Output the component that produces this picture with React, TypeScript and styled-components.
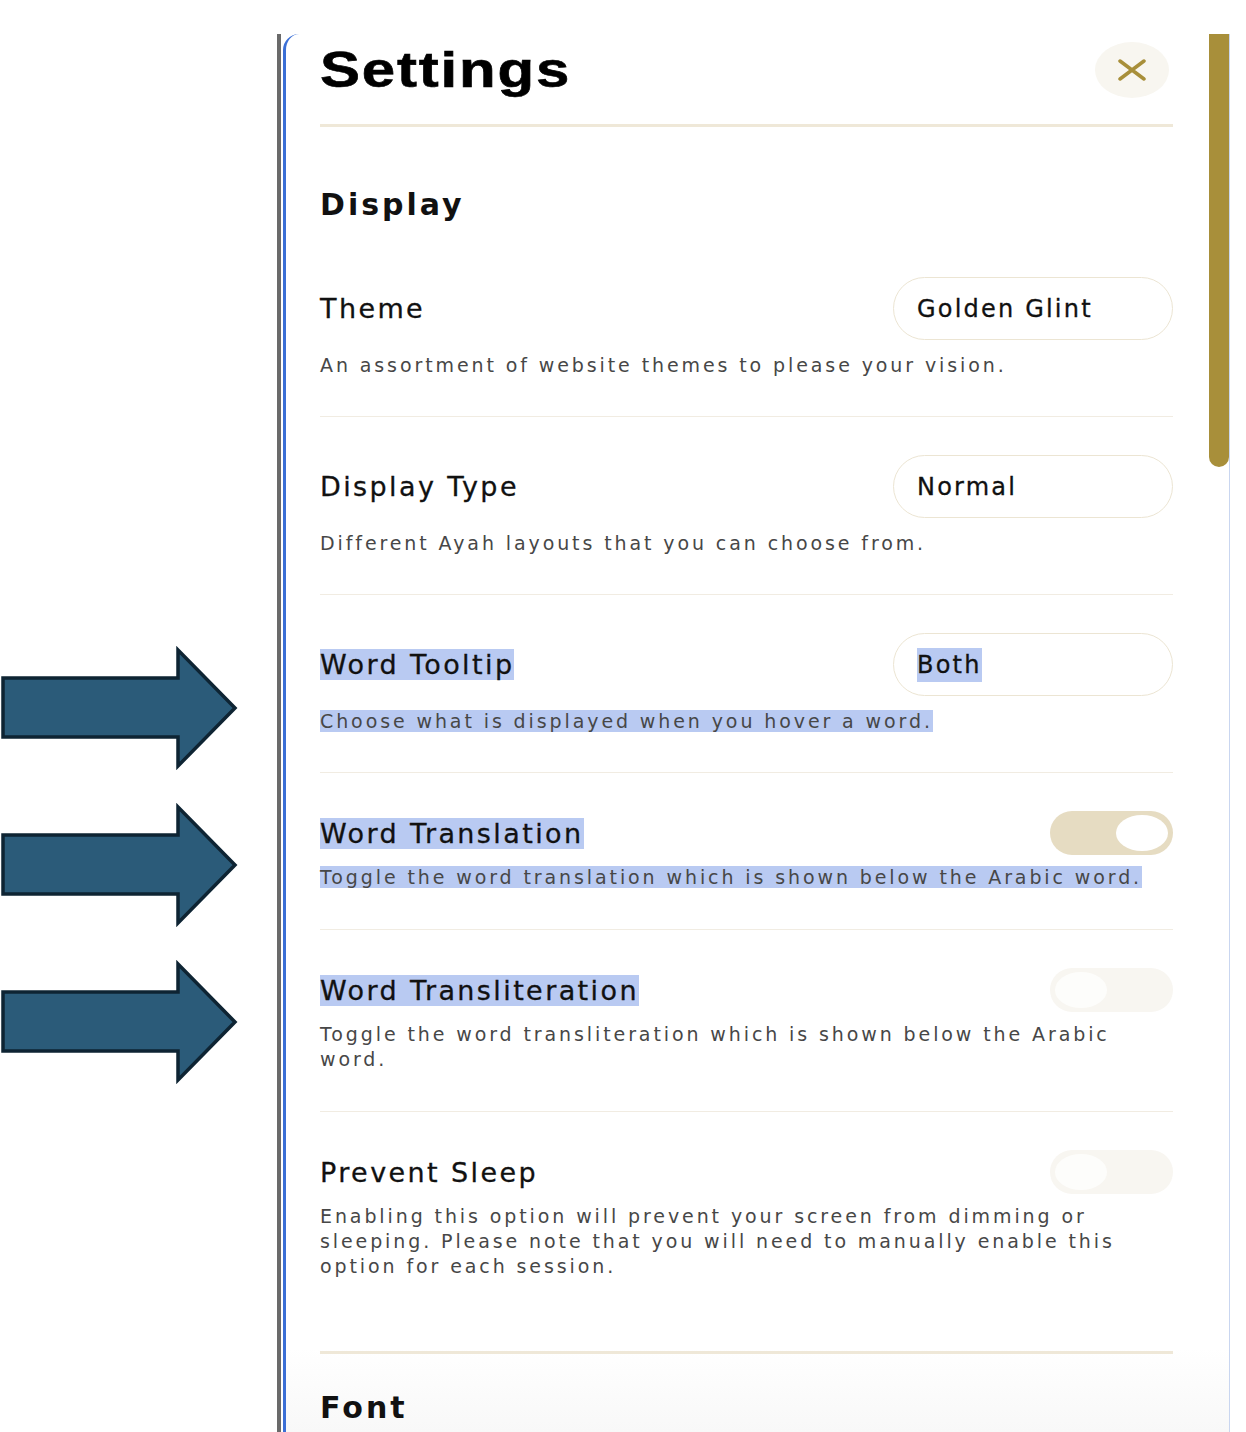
import styled, { createGlobalStyle } from "styled-components";

const GlobalStyle = createGlobalStyle`
  body {
    margin: 0;
    background: #ffffff;
    font-family: "DejaVu Sans", "Liberation Sans", sans-serif;
    color: #111111;
    overflow: hidden;
  }
`;

type RowType = {
  label: string;
  description: string;
  control: "select" | "toggle";
  value?: string;
  on?: boolean;
  marked?: boolean;
};

const rows: RowType[] = [
  {
    label: "Theme",
    description: "An assortment of website themes to please your vision.",
    control: "select",
    value: "Golden Glint",
  },
  {
    label: "Display Type",
    description: "Different Ayah layouts that you can choose from.",
    control: "select",
    value: "Normal",
  },
  {
    label: "Word Tooltip",
    description: "Choose what is displayed when you hover a word.",
    control: "select",
    value: "Both",
    marked: true,
  },
  {
    label: "Word Translation",
    description:
      "Toggle the word translation which is shown below the Arabic word.",
    control: "toggle",
    on: true,
    marked: true,
  },
  {
    label: "Word Transliteration",
    description:
      "Toggle the word transliteration which is shown below the Arabic word.",
    control: "toggle",
    on: false,
  },
  {
    label: "Prevent Sleep",
    description:
      "Enabling this option will prevent your screen from dimming or sleeping. Please note that you will need to manually enable this option for each session.",
    control: "toggle",
    on: false,
  },
];

// which rows have the label highlighted (transliteration only has its title selected)
const markedLabels = ["Word Tooltip", "Word Translation", "Word Transliteration"];

const Arrow = () => (
  <svg width="240" height="124" viewBox="0 0 240 124">
    <polygon
      points="3,32 178,32 178,4 235,62 178,120 178,91 3,91"
      fill="#2b5b79"
      stroke="#0e2433"
      strokeWidth="3.5"
    />
  </svg>
);

const SettingRow = (props: RowType & { last?: boolean }) => {
  const { label, description, control, value, on, marked, last } = props;
  return (
    <Row $toggle={control === "toggle"} $last={last}>
      <RowHead>
        <Label>
          <Mark $marked={markedLabels.includes(label)}>{label} </Mark>
        </Label>
        {control === "select" ? (
          <Select>
            <Mark $marked={marked}>{value}</Mark>
          </Select>
        ) : (
          <Toggle $on={on}>
            <Knob $on={on} />
          </Toggle>
        )}
      </RowHead>
      <Description>
        <Mark $marked={marked}>{description} </Mark>
      </Description>
    </Row>
  );
};

export default function App() {
  return (
    <>
      <GlobalStyle />
      <Page>
        <ArrowColumn>
          <Arrow />
          <Arrow />
          <Arrow />
        </ArrowColumn>
        <Panel>
          <PanelInner>
            <Content>
              <Header>
                <Title>Settings</Title>
                <CloseButton>
                  <svg width="30" height="22" viewBox="0 0 30 22">
                    <path
                      d="M3 2 L27 20 M27 2 L3 20"
                      stroke="#a88f3a"
                      strokeWidth="3.5"
                      strokeLinecap="round"
                    />
                  </svg>
                </CloseButton>
              </Header>
              <SectionTitle>Display</SectionTitle>
              {rows.map((r, i) => (
                <SettingRow key={r.label} {...r} last={i === rows.length - 1} />
              ))}
              <SectionDivider />
              <SectionTitle $top={36}>Font</SectionTitle>
            </Content>
            <ScrollTrack>
              <ScrollThumb />
            </ScrollTrack>
          </PanelInner>
        </Panel>
      </Page>
    </>
  );
}

const Page = styled.div`
  display: flex;
  height: 1432px;
  overflow: hidden;
`;

const ArrowColumn = styled.div`
  width: 277px;
  flex-shrink: 0;
  display: flex;
  flex-direction: column;
  gap: 33px;
  padding-top: 646px;
  box-sizing: border-box;
`;

const Panel = styled.div`
  margin-top: 34px;
  width: 953px;
  height: 1398px;
  border-left: 4px solid #6a6a6a;
  display: flex;
  box-sizing: border-box;
`;

const PanelInner = styled.div`
  flex: 1;
  display: flex;
  margin-left: 2px;
  border-left: 3px solid #3b6fd6;
  border-top-left-radius: 16px;
  background: linear-gradient(
    to bottom,
    #ffffff 0%,
    #ffffff 94%,
    #f8f8f8 100%
  );
`;

const Content = styled.div`
  flex: 1;
  min-width: 0;
  padding: 0 34px 0 34px;
  overflow: hidden;
`;

const Header = styled.div`
  display: flex;
  align-items: center;
  justify-content: space-between;
  height: 72px;
  padding-bottom: 18px;
  border-bottom: 3px solid #efe8d8;
`;

const Title = styled.h1`
  margin: 0;
  font-family: "Liberation Sans", Arial, sans-serif;
  font-size: 50px;
  font-weight: 700;
  letter-spacing: 1.5px;
  -webkit-text-stroke: 0.6px #000;
  color: #000;
  transform: scaleX(1.2);
  transform-origin: left center;
`;

const CloseButton = styled.div`
  width: 74px;
  height: 56px;
  margin-right: 4px;
  border-radius: 50%;
  background: #f8f6f0;
  display: flex;
  align-items: center;
  justify-content: center;
`;

const SectionTitle = styled.h2<{ $top?: number }>`
  margin: ${(p) => (p.$top ? p.$top : 60)}px 0 16px 0;
  font-size: 30px;
  font-weight: 600;
  line-height: 36px;
  letter-spacing: 3px;
`;

const Row = styled.div<{ $toggle?: boolean; $last?: boolean }>`
  padding: 38px 0 ${(p) => (p.$last ? 72 : p.$toggle ? 39 : 38)}px 0;
  border-bottom: ${(p) => (p.$last ? "none" : "1px solid #f1ece2")};
  display: flex;
  flex-direction: column;
  gap: ${(p) => (p.$toggle ? 10 : 13)}px;
`;

const RowHead = styled.div`
  display: flex;
  align-items: center;
  justify-content: space-between;
`;

const Label = styled.div`
  font-size: 27px;
  line-height: 37px;
  letter-spacing: 2.4px;
  -webkit-text-stroke: 0.3px #111;
`;

const Mark = styled.span<{ $marked?: boolean }>`
  background: ${(p) => (p.$marked ? "#b9caf2" : "transparent")};
`;

const Select = styled.div`
  width: 280px;
  height: 63px;
  box-sizing: border-box;
  border: 1.5px solid #ece5d3;
  border-radius: 32px;
  padding-left: 23px;
  display: flex;
  align-items: center;
  font-size: 24px;
  line-height: 34px;
  letter-spacing: 2.2px;
  -webkit-text-stroke: 0.3px #111;
`;

const Toggle = styled.div<{ $on?: boolean }>`
  width: 123px;
  height: 44px;
  border-radius: 22px;
  background: ${(p) => (p.$on ? "#e6dcc2" : "#f8f6f1")};
  display: flex;
  align-items: center;
  justify-content: ${(p) => (p.$on ? "flex-end" : "flex-start")};
  padding: 0 5px;
  box-sizing: border-box;
`;

const Knob = styled.div<{ $on?: boolean }>`
  width: 52px;
  height: 36px;
  border-radius: 50%;
  background: ${(p) => (p.$on ? "#ffffff" : "#fdfdfb")};
`;

const Description = styled.div`
  font-size: 19px;
  line-height: 25px;
  color: #474747;
  letter-spacing: 2.9px;
  max-width: 852px;
`;

const SectionDivider = styled.div`
  border-top: 3px solid #efe8d8;
`;

const ScrollTrack = styled.div`
  width: 22px;
  flex-shrink: 0;
  border-right: 1.5px solid #c9d6f0;
`;

const ScrollThumb = styled.div`
  width: 20px;
  height: 433px;
  margin-left: 2px;
  background: #a88f3a;
  border-radius: 0 0 10px 10px;
`;
